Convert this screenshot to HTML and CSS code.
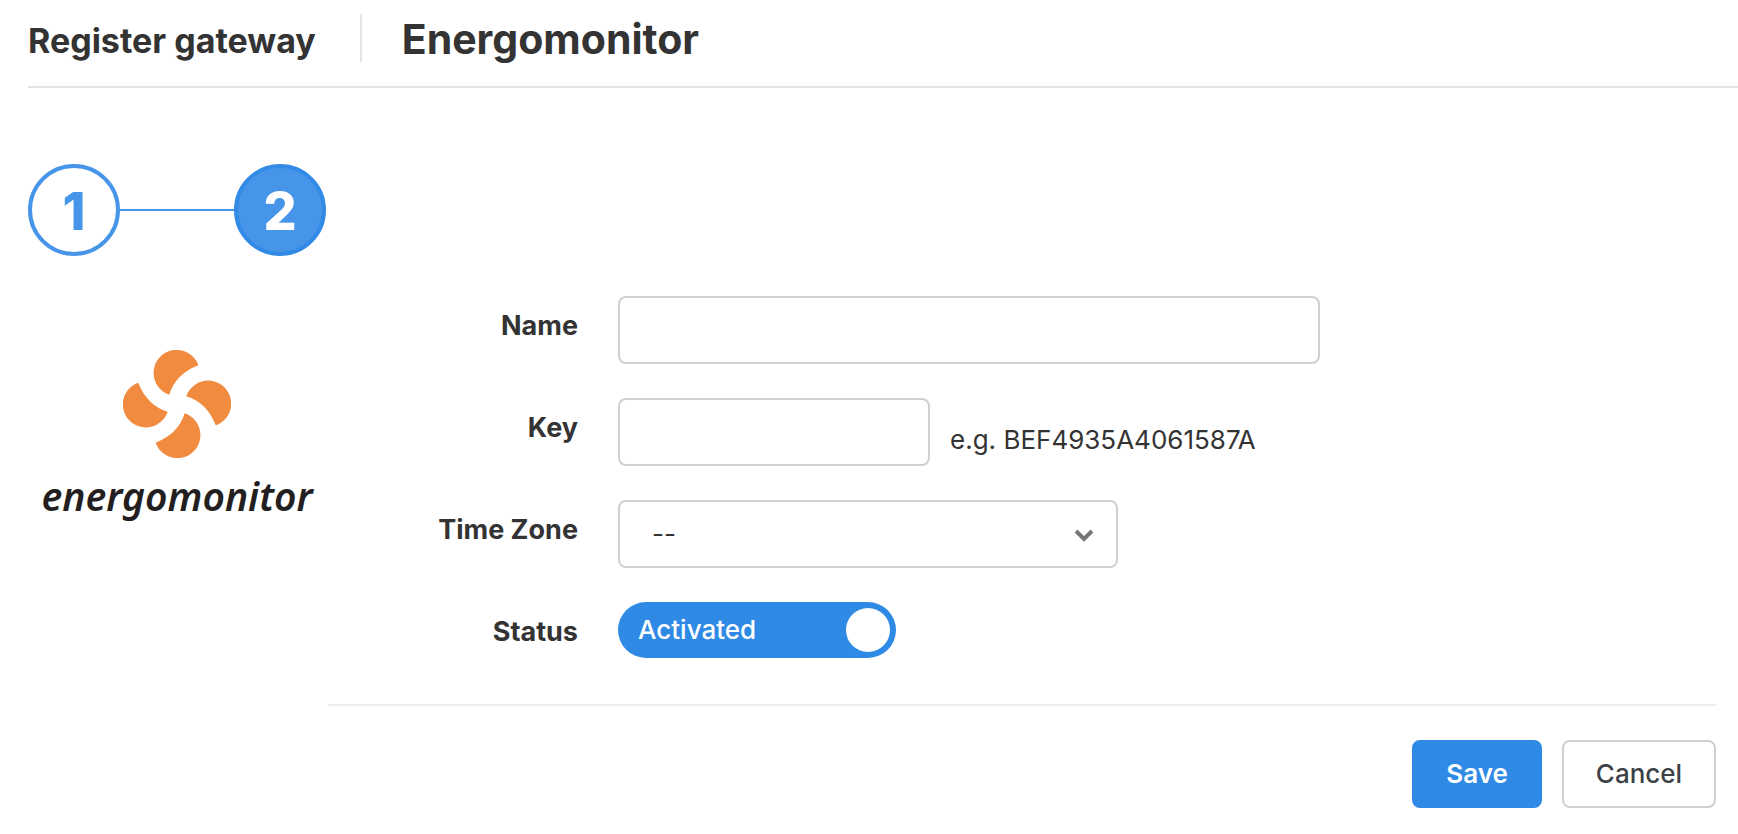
FILE: index.html
```html
<!DOCTYPE html>
<html lang="en">
<head>
  <meta charset="UTF-8">
  <meta name="viewport" content="width=device-width, initial-scale=1">
  <title>Register gateway</title>
  <link rel="stylesheet" href="styles.css">
</head>
<body>
  <header class="header">
    <h1 class="title">Register gateway</h1>
    <h2 class="subtitle">Energomonitor</h2>
  </header>

  <ol class="steps">
    <li class="step">1</li>
    <li class="step active">2</li>
  </ol>

  <main class="content">
    <div class="brand">
      <svg class="brand-icon" viewBox="-162 -162 324 324" aria-hidden="true">
        <defs>
          <path id="blade" d="M64 -116 A69 69 0 1 0 -23 -28 Q-4 -90 64 -116 Z"/>
        </defs>
        <use href="#blade"/>
        <use href="#blade" transform="rotate(90)"/>
        <use href="#blade" transform="rotate(180)"/>
        <use href="#blade" transform="rotate(270)"/>
      </svg>
      <div class="brand-name">energomonitor</div>
    </div>

    <form class="form">
      <div class="row">
        <label class="label" for="name">Name</label>
        <input class="field name" type="text" id="name">
      </div>
      <div class="row">
        <label class="label" for="key">Key</label>
        <input class="field key" type="text" id="key">
        <span class="hint">e.g. BEF4935A4061587A</span>
      </div>
      <div class="row">
        <label class="label" for="timezone">Time Zone</label>
        <div class="select">
          <select class="field" id="timezone">
            <option>--</option>
          </select>
          <svg class="chevron" viewBox="0 0 20 14" aria-hidden="true">
            <path d="M2 3 L10 11 L18 3"/>
          </svg>
        </div>
      </div>
      <div class="row">
        <label class="label" for="status">Status</label>
        <label class="toggle">
          <span>Activated</span>
          <input type="checkbox" id="status" checked>
        </label>
      </div>
      <div class="actions">
        <button class="button save" type="submit">Save</button>
        <button class="button cancel" type="button">Cancel</button>
      </div>
    </form>
  </main>
</body>
</html>
```
FILE: styles.css
```css
* {
  box-sizing: border-box;
}

body {
  margin: 0;
  padding-left: 28px;
  background-color: #fff;
  color: #333;
  font-family: Inter, "Liberation Sans", sans-serif;
  font-size: 26px;
  line-height: 36px;
}

.header {
  display: flex;
  align-items: center;
  padding: 14px 0 24px;
  border-bottom: 2px solid #e5e5e5;
}

.title,
.subtitle {
  height: 48px;
  margin: 0;
  font-weight: 700;
}

.title {
  padding-right: 44px;
  font-size: 34px;
  line-height: 54px;
}

.subtitle {
  padding-left: 40px;
  border-left: 2px solid #e5e5e5;
  font-size: 41px;
  line-height: 50px;
}

.steps {
  display: flex;
  align-items: center;
  margin: 76px 0 40px;
  padding: 0;
  list-style: none;
}

.step {
  display: flex;
  align-items: center;
  justify-content: center;
  width: 92px;
  height: 92px;
  padding-top: 4px;
  border: 4px solid #4795e8;
  border-radius: 50%;
  color: #4795e8;
  font-size: 52px;
  font-weight: 800;
}

.step.active {
  order: 2;
  border-color: #318ae6;
  background-color: #4795e8;
  color: #fff;
}

/* line between the circles */
.steps::before {
  content: "";
  order: 1;
  width: 114px;
  height: 2px;
  background-color: #4795e8;
}

.content {
  display: flex;
  padding-right: 22px;
}

.brand {
  display: flex;
  flex-direction: column;
  align-items: center;
  flex: 0 0 300px;
  padding: 54px 2px 0 0;
}

.brand-icon {
  width: 108px;
  height: 108px;
  fill: #f08b3f;
}

.brand-name {
  margin-top: 20px;
  color: #231f20;
  font-family: "Noto Sans", sans-serif;
  font-size: 39px;
  font-style: italic;
  font-weight: 600;
}

.form {
  flex: 1;
}

.row {
  display: flex;
  align-items: flex-start;
  margin-bottom: 34px;
}

.label {
  width: 250px;
  margin-right: 40px;
  padding-top: 12px;
  font-size: 27px;
  font-weight: 700;
  text-align: right;
}

.field {
  width: 100%;
  height: 68px;
  padding: 0 32px;
  border: 2px solid #cdd1d5;
  border-radius: 8px;
  background-color: #fff;
  color: #333;
  font: inherit;
}

.name {
  max-width: 702px;
}

.key {
  max-width: 312px;
}

.hint {
  padding: 24px 0 0 20px;
  white-space: nowrap;
}

.select {
  position: relative;
  width: 100%;
  max-width: 500px;
}

.select .field {
  display: block;
  appearance: none;
}

.chevron {
  position: absolute;
  top: 28px;
  right: 24px;
  width: 20px;
  height: 14px;
  fill: none;
  stroke: #777;
  stroke-width: 4;
  pointer-events: none;
}

.toggle {
  display: flex;
  align-items: center;
  justify-content: space-between;
  width: 278px;
  height: 56px;
  padding: 0 6px 0 20px;
  border-radius: 28px;
  background-color: #2f8ae5;
  color: #fff;
  font-weight: 500;
}

.toggle input {
  appearance: none;
  width: 44px;
  height: 44px;
  margin: 0;
  border-radius: 50%;
  background-color: #fff;
}

.actions {
  display: flex;
  justify-content: flex-end;
  gap: 20px;
  margin-top: 46px;
  padding: 34px 0 26px;
  border-top: 2px solid #eee;
}

.button {
  height: 68px;
  border: 2px solid #cdd1d5;
  border-radius: 8px;
  background-color: #fff;
  color: #3c4147;
  font: inherit;
  font-weight: 500;
}

.save {
  width: 130px;
  border-color: #2f8ae5;
  background-color: #2f8ae5;
  color: #fff;
  font-weight: 600;
}

.cancel {
  width: 154px;
}
```
